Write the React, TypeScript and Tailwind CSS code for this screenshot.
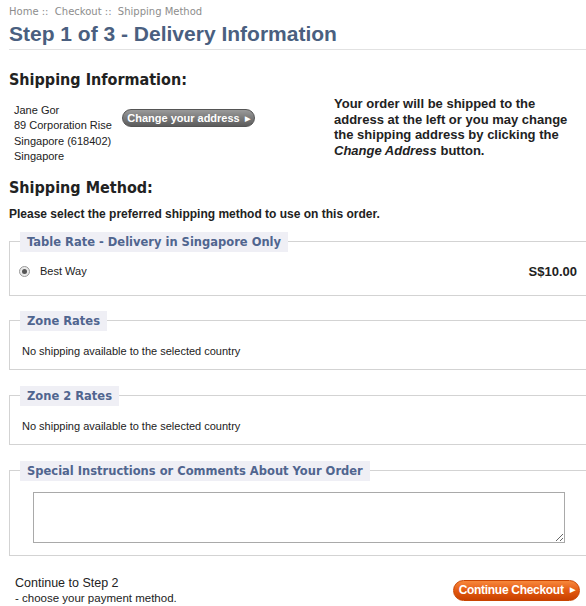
import React from 'react';

const legendCls =
    "ml-0 px-[7px] h-[20px] leading-[20px] bg-[#efeff5] text-[11.5px] font-bold text-[#50658f] font-['DejaVu_Sans',sans-serif]";

const Box = ({ title, children, className = "" }: { title: string; children: React.ReactNode; className?: string }) => (
    <fieldset className={`w-[590px] border border-[#d3d3d3] px-[10px] ${className}`}>
        <legend className={legendCls}>{title}</legend>
        {children}
    </fieldset>
);

const App = () => {
    return (
        <div className="w-[586px] h-[606px] overflow-hidden bg-white text-[#222] font-['Liberation_Sans',Arial,sans-serif]">
            <div className="pl-[9px]">
                {/* breadcrumb */}
                <div className="pt-[5px] h-[19px] text-[10px] leading-[14px] text-[#8d8d8d] font-['DejaVu_Sans',sans-serif]">
                    Home :: &nbsp;Checkout :: &nbsp;Shipping Method
                </div>
                <h1 className="mt-[2px] text-[21px] leading-[26px] font-bold text-[#4a5f80]">
                    Step 1 of 3 - Delivery Information
                </h1>
                <div className="mt-[2px] h-px bg-[#e2e2e2]" />

                <h2 className="mt-[20px] text-[16px] leading-[20px] font-bold text-[#222] font-['DejaVu_Sans_Condensed','DejaVu_Sans',sans-serif]">
                    Shipping Information:
                </h2>

                <div className="flex mt-[6px]">
                    <address className="not-italic pl-[5px] pt-[7px] w-[113px] text-[11px] leading-[15.4px]">
                        Jane Gor<br />
                        89 Corporation Rise<br />
                        Singapore (618402)<br />
                        Singapore
                    </address>
                    <div className="pt-[13px] w-[212px]">
                        <button className="h-[18px] w-[133px] rounded-full border border-[#555] bg-gradient-to-b from-[#9a9a9a] to-[#5c5c5c] text-white text-[11px] font-bold leading-[15px] flex items-center justify-center gap-[5px]">
                            Change your address <span className="text-[7px]">▶</span>
                        </button>
                    </div>
                    <p className="w-[240px] text-[13px] leading-[15.6px] font-bold text-[#222]">
                        Your order will be shipped to the address at the left or you may change the shipping address by clicking the <em>Change Address</em> button.
                    </p>
                </div>

                <h2 className="mt-[13px] text-[16px] leading-[20px] font-bold text-[#222] font-['DejaVu_Sans_Condensed','DejaVu_Sans',sans-serif]">
                    Shipping Method:
                </h2>
                <p className="mt-[8px] text-[12px] leading-[16px] font-bold text-[#222]">
                    Please select the preferred shipping method to use on this order.
                </p>

                <Box title="Table Rate - Delivery in Singapore Only" className="mt-[10px] pb-[15px]">
                    <div className="mt-[12px] flex items-center h-[16px] w-[557px]">
                        <span className="-ml-[1px] w-[11px] h-[11px] rounded-full border border-[#9a9a9a] bg-[#e9e9e9] flex items-center justify-center">
                            <span className="w-[5px] h-[5px] rounded-full bg-[#555]" />
                        </span>
                        <span className="ml-[10px] text-[11px]">Best Way</span>
                        <span className="ml-auto text-[13px] font-bold">S$10.00</span>
                    </div>
                </Box>

                <Box title="Zone Rates" className="mt-[15px] pb-[11px]">
                    <p className="mt-[13px] text-[11px] leading-[14px] pl-[2px]">No shipping available to the selected country</p>
                </Box>

                <Box title="Zone 2 Rates" className="mt-[16px] pb-[11px]">
                    <p className="mt-[13px] text-[11px] leading-[14px] pl-[2px]">No shipping available to the selected country</p>
                </Box>

                <Box title="Special Instructions or Comments About Your Order" className="mt-[16px] pb-[12px]">
                    <textarea className="mt-[11px] ml-[13px] block w-[532px] h-[51px] border border-[#a9a9a9] resize-y" />
                </Box>

                <div className="mt-[20px] flex items-start pr-[6px]">
                    <div className="pl-[6px]">
                        <div className="text-[12.5px] leading-[15px]">Continue to Step 2</div>
                        <div className="text-[11.5px] leading-[15px]">- choose your payment method.</div>
                    </div>
                    <button className="ml-auto mt-[4px] h-[21px] w-[127px] rounded-full border border-[#c94400] bg-gradient-to-b from-[#f7873a] via-[#e35a10] to-[#c94000] text-white text-[12px] font-bold flex items-center justify-center gap-[6px] tracking-[-0.3px]">
                        Continue Checkout <span className="text-[7px]">▶</span>
                    </button>
                </div>
            </div>
        </div>
    );
};

export default App;
